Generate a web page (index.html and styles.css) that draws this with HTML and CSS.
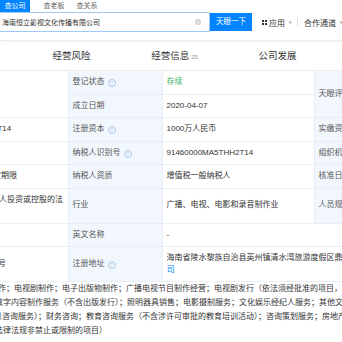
FILE: index.html
```html
<!DOCTYPE html>
<html lang="zh-CN">
<head>
  <meta charset="UTF-8">
  <meta name="viewport" content="width=device-width, initial-scale=1.0">
  <title>海南恒立影视文化传播有限公司</title>
  <link rel="stylesheet" href="styles.css">
</head>
<body>
  <div id="header">
    <div class="search-tabs">
      <span class="search-tab active">查公司</span>
      <span class="search-tab">查老板</span>
      <span class="search-tab">查关系</span>
    </div>
    <div class="search-row">
      <div class="search-box">
        <span class="search-text">海南恒立影视文化传播有限公司</span>
        <span class="clear">&times;</span>
      </div>
      <div class="search-btn">天眼一下</div>
      <div class="nav-item">
        <span class="grid-icon"><i></i><i></i><i></i><i></i></span>应用<span class="caret">&#9662;</span>
      </div>
      <span class="nav-sep"></span>
      <div class="nav-item">合作通道<span class="caret">&#9662;</span></div>
    </div>
  </div>

  <div id="section-tabs">
    <span class="section-tab">经营风险</span>
    <span class="section-tab">经营信息<span class="count">25</span></span>
    <span class="section-tab">公司发展</span>
  </div>

  <div id="detail">
    <table class="info">
      <colgroup>
        <col class="col-left">
        <col class="col-label">
        <col class="col-value">
        <col class="col-label2">
        <col class="col-value2">
      </colgroup>
      <tr>
        <td class="cut" rowspan="2"></td>
        <td class="label">登记状态<span class="help">?</span></td>
        <td class="value status">存续</td>
        <td class="label" rowspan="2">天眼评分</td>
        <td class="value"></td>
      </tr>
      <tr>
        <td class="label">成立日期</td>
        <td class="value">2020-04-07</td>
        <td class="value"></td>
      </tr>
      <tr>
        <td class="cut"><div class="tail tail-code">2T14</div></td>
        <td class="label">注册资本<span class="help">?</span></td>
        <td class="value">1000万人民币</td>
        <td class="label">实缴资本</td>
        <td class="value"></td>
      </tr>
      <tr>
        <td class="cut"></td>
        <td class="label">纳税人识别号<span class="help">?</span></td>
        <td class="value">91460000MA5THH2T14</td>
        <td class="label">组织机构代码</td>
        <td class="value"></td>
      </tr>
      <tr>
        <td class="cut"><div class="tail tail-term">无固定期限</div></td>
        <td class="label">纳税人资质</td>
        <td class="value">增值税一般纳税人</td>
        <td class="label">核准日期</td>
        <td class="value"></td>
      </tr>
      <tr>
        <td class="cut two-line">
          <div class="tail tail-type">自然人投资或控股的法</div>
          <div class="tail tail-hidden">人独资）</div>
        </td>
        <td class="label">行业</td>
        <td class="value">广播、电视、电影和录音制作业</td>
        <td class="label">人员规模</td>
        <td class="value"></td>
      </tr>
      <tr>
        <td class="cut"></td>
        <td class="label">英文名称</td>
        <td class="value" colspan="3">-</td>
      </tr>
      <tr>
        <td class="cut"><div class="tail tail-no">号</div></td>
        <td class="label">注册地址<span class="help">?</span></td>
        <td class="value two-line" colspan="3">
          <div class="address">海南省陵水黎族自治县英州镇清水湾旅游度假区鼎龙湾国际会议中心</div>
          <span class="link">司</span>
        </td>
      </tr>
      <tr>
        <td class="scope" colspan="5">
          <div class="tail tail-s1">作；电视剧制作；电子出版物制作；广播电视节目制作经营；电视剧发行（依法须经批准的项目，经相关部门批准后方可开展经营活动）</div>
          <div class="tail tail-s2">数字内容制作服务（不含出版发行）；照明器具销售；电影摄制服务；文化娱乐经纪人服务；其他文化艺术经纪代理</div>
          <div class="tail tail-s3">息咨询服务）；财务咨询；教育咨询服务（不含涉许可审批的教育培训活动）；咨询策划服务；房地产咨询</div>
          <div class="tail tail-s4">法律法规非禁止或限制的项目）</div>
        </td>
      </tr>
    </table>
  </div>
</body>
</html>
```

FILE: styles.css
```css
body {
  margin: 0;
  width: 342px;
  overflow: hidden;
  font-family: "Liberation Sans", "Noto Sans CJK SC", sans-serif;
  color: #333;
  background: #fff;
}

#header {
  height: 40px;
  border-bottom: 1px solid #ebebeb;
  box-shadow: 0 2px 3px rgba(0, 0, 0, 0.04);
}
.search-tabs {
  display: flex;
  height: 12px;
  font-size: 7px;
  line-height: 12px;
}
.search-tab {
  color: #666;
  padding: 0 4.5px;
  margin-right: 3px;
}
.search-tab.active {
  background: #0084ff;
  color: #fff;
  margin-right: 9px;
}
.search-row {
  display: flex;
  align-items: center;
  height: 20px;
  white-space: nowrap;
}
.search-box {
  flex-shrink: 0;
  width: 210px;
  height: 20px;
  box-sizing: border-box;
  border: 1px solid #9cc9f5;
  border-left: 0;
  display: flex;
  align-items: center;
  padding: 0 8px 0 2px;
  font-size: 7px;
}
.search-text {
  flex: 1;
}
.clear {
  width: 6px;
  height: 6px;
  border-radius: 50%;
  background: #cfcfcf;
  color: #fff;
  font-size: 6px;
  line-height: 6px;
  text-align: center;
}
.search-btn {
  flex-shrink: 0;
  width: 42px;
  height: 18px;
  background: #0084ff;
  color: #fff;
  font-size: 7.5px;
  line-height: 18px;
  text-align: center;
}
.nav-item {
  flex-shrink: 0;
  display: flex;
  align-items: center;
  margin-left: 10px;
  font-size: 8px;
  color: #333;
}
.grid-icon {
  display: grid;
  grid-template-columns: 2px 2px;
  gap: 1px;
  margin-right: 2px;
}
.grid-icon i {
  width: 2px;
  height: 2px;
  background: #333;
}
.caret {
  font-size: 5px;
  color: #999;
  margin-left: 4px;
}
.nav-sep {
  flex-shrink: 0;
  width: 1px;
  height: 8px;
  background: #ddd;
  margin-left: 5px;
  margin-right: -4px;
}

#section-tabs {
  display: flex;
  height: 29px;
  padding-left: 20px;
  font-size: 9.5px;
  line-height: 29px;
}
.section-tab {
  width: 103px;
  text-align: center;
  color: #333;
}
.count {
  font-size: 6px;
  color: #999;
  margin-left: 2px;
}

#detail {
  overflow: hidden;
}
.info {
  width: 604px;
  table-layout: fixed;
  border-collapse: collapse;
  font-size: 8px;
  line-height: 12.5px;
}
.col-left { width: 68px; }
.col-label { width: 94px; }
.col-value { width: 152px; }
.col-label2 { width: 90px; }
.col-value2 { width: 200px; }
.info td {
  border: 1px solid #e9eef4;
  padding: 5px 4px;
  vertical-align: middle;
  overflow: hidden;
  white-space: nowrap;
}
.info td.cut {
  padding-left: 0;
  border-left: 0;
}
.info td.two-line {
  line-height: 12px;
}
.label {
  background: #f2f7fd;
  color: #555;
}
.value {
  color: #333;
}
.status {
  color: #2fb05c;
}
.help {
  display: inline-block;
  width: 6px;
  height: 6px;
  margin-left: 3px;
  border: 1px solid #a9c8e8;
  border-radius: 50%;
  color: #a9c8e8;
  font-size: 5px;
  line-height: 6px;
  text-align: center;
  vertical-align: -1px;
}
.link {
  color: #0084ff;
}
.info td.scope {
  padding: 0 0 4px 0;
  border-left: 0;
  line-height: 14px;
}
.tail-code { text-indent: -7px; }
.tail-term { text-indent: -23px; }
.tail-type { text-indent: -17px; }
.tail-hidden { text-indent: -40px; }
.tail-no { text-indent: -2px; }
.tail-s1 { text-indent: -2px; }
.tail-s2 { text-indent: -5px; }
.tail-s3 { text-indent: -6px; }
.tail-s4 { text-indent: -5px; }
```
